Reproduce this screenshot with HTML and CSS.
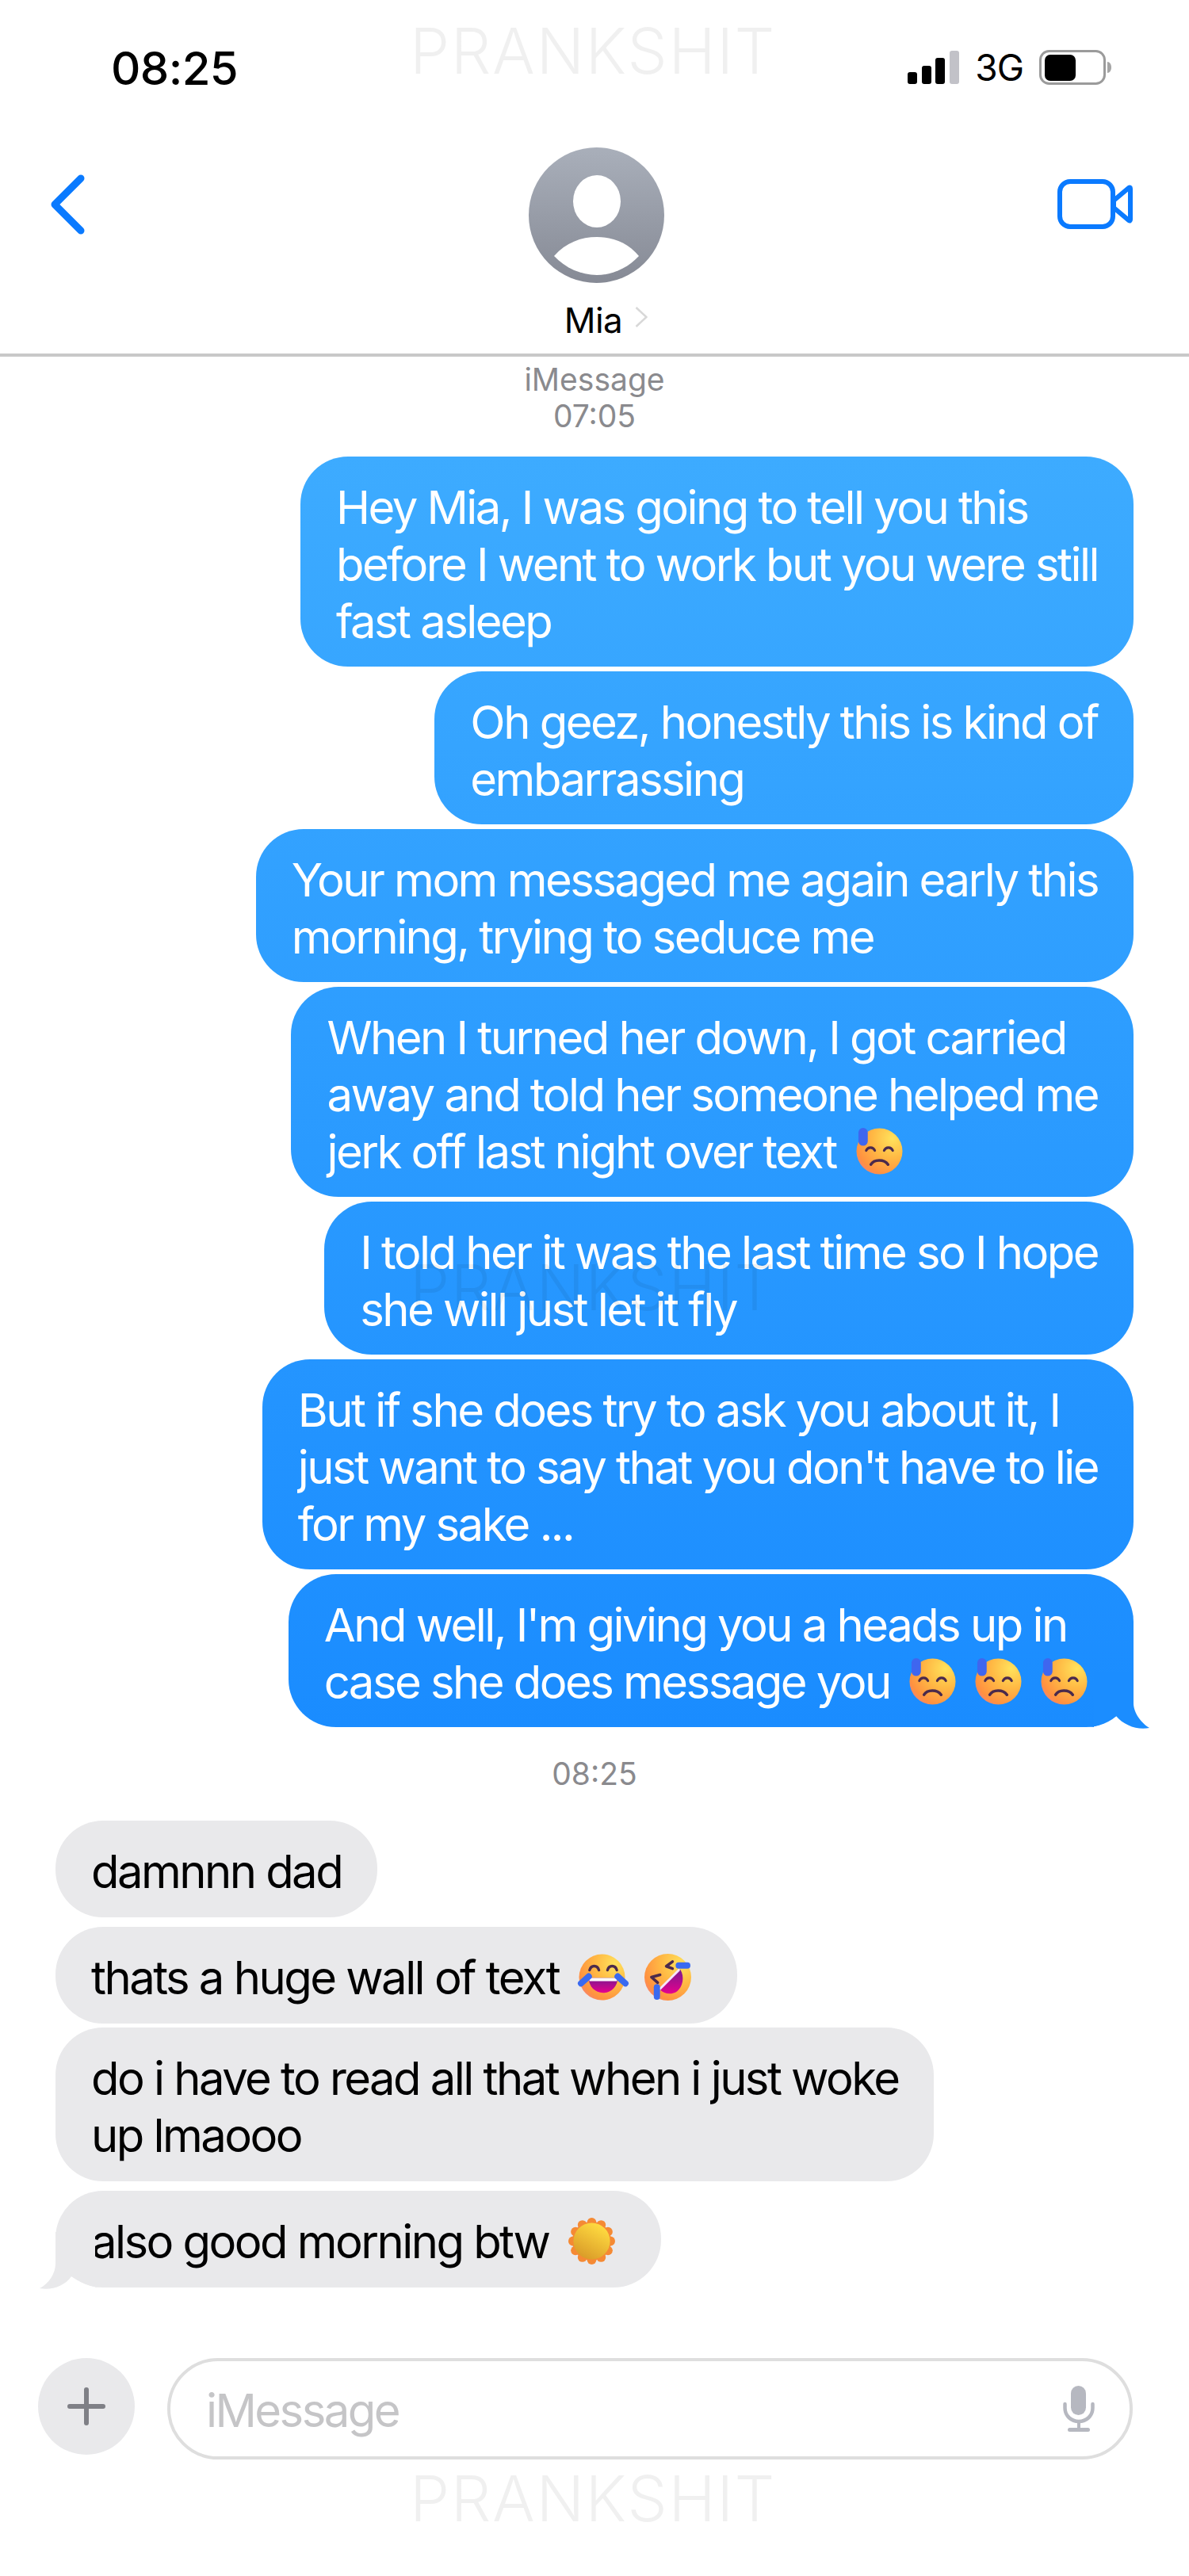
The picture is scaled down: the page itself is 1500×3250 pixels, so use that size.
FILE: index.html
```html
<!DOCTYPE html>
<html lang="en">
<head>
<meta charset="utf-8">
<title>Mia</title>
<link rel="stylesheet" href="styles.css">
</head>
<body>
<svg class="defs" aria-hidden="true">
  <defs>
    <linearGradient id="avatarG" x1="0" y1="0" x2="0" y2="1"><stop offset="0" stop-color="#a9afba"/><stop offset="1" stop-color="#868a95"/></linearGradient>
    <radialGradient id="faceG" cx="0.78" cy="0.22" r="0.95"><stop offset="0" stop-color="#ffe25c"/><stop offset="0.45" stop-color="#ffb944"/><stop offset="0.85" stop-color="#ff9140"/><stop offset="1" stop-color="#f5827a"/></radialGradient>
    <linearGradient id="mouthG" x1="0" y1="0" x2="0" y2="1"><stop offset="0" stop-color="#7a1a8e"/><stop offset="1" stop-color="#e6008e"/></linearGradient>
    <linearGradient id="sunG" x1="0.8" y1="0.1" x2="0.3" y2="1"><stop offset="0" stop-color="#ffdb40"/><stop offset="1" stop-color="#d99a28"/></linearGradient>
    <symbol id="sad" viewBox="0 0 60 60" overflow="visible">
      <circle cx="30" cy="30" r="29.5" fill="url(#faceG)"/>
      <rect x="3" y="0" width="12" height="23" rx="6" fill="#3f66ef"/>
      <g fill="none" stroke="#4b2a4c" stroke-width="3.2" stroke-linecap="round">
        <path d="M13 29c2-5 9-5 11 0"/><path d="M36 29c2-5 9-5 11 0"/>
        <path d="M19 47c4-7 17-7 22 0" stroke-width="3.6"/>
      </g>
    </symbol>
    <symbol id="joy" viewBox="0 0 60 60" overflow="visible">
      <circle cx="30" cy="30" r="29.5" fill="url(#faceG)"/>
      <path d="M13 31h37c0 11-8 19-18.500 19S13 42 13 31z" fill="url(#mouthG)"/>
      <path d="M13 31h37l-1 4H14z" fill="#fff"/>
      <g fill="none" stroke="#4b2a4c" stroke-width="3.400" stroke-linecap="round">
        <path d="M14 21c2-7 10-7 12 0"/><path d="M37 21c2-7 10-7 12 0"/>
      </g>
      <g fill="none" stroke="#3a6af0" stroke-width="8" stroke-linecap="round">
        <path d="M3 38l10-9"/><path d="M50 29l10 9"/>
      </g>
    </symbol>
    <symbol id="rofl" viewBox="0 0 60 60" overflow="visible">
      <circle cx="30" cy="30" r="30" fill="url(#faceG)"/>
      <path d="M20 46L46 20c6 10 3 22-4 28-7 5-16 4-22-2z" fill="url(#mouthG)"/>
      <path d="M20 46L46 20l1 3-25 25z" fill="#f7e6ff" transform="translate(-1.500 -1.500)"/>
      <g fill="none" stroke="#4b2a4c" stroke-width="3.600" stroke-linecap="round" stroke-linejoin="round">
        <path d="M36 10l-8 6 8 3"/><path d="M20 27l-11 3 8 7"/>
      </g>
      <g fill="none" stroke="#3a6af0" stroke-width="8" stroke-linecap="round">
        <path d="M44 15h11"/><path d="M16 43v12"/>
      </g>
    </symbol>
    <symbol id="sun" viewBox="0 0 60 60" overflow="visible">
      <g fill="#f58a34">
        <circle cx="30" cy="6" r="6"/><circle cx="42" cy="9.200" r="6"/><circle cx="50.800" cy="18" r="6"/><circle cx="54" cy="30" r="6"/><circle cx="50.800" cy="42" r="6"/><circle cx="42" cy="50.800" r="6"/><circle cx="30" cy="54" r="6"/><circle cx="18" cy="50.800" r="6"/><circle cx="9.200" cy="42" r="6"/><circle cx="6" cy="30" r="6"/><circle cx="9.200" cy="18" r="6"/><circle cx="18" cy="9.200" r="6"/>
        <circle cx="30" cy="30" r="25"/>
      </g>
      <circle cx="30" cy="30" r="23.500" fill="url(#sunG)"/>
    </symbol>
  </defs>
</svg>

<main class="page">
  <header class="status">
    <span class="clock">08:25</span>
    <div class="indicators">
      <svg class="signal" viewBox="0 0 65 42">
        <rect x="0" y="27" width="12" height="15" rx="3" fill="#000"/>
        <rect x="18" y="19" width="12" height="23" rx="3" fill="#000"/>
        <rect x="35" y="9" width="12" height="33" rx="3" fill="#000"/>
        <rect x="53" y="0" width="12" height="42" rx="3" fill="#c2c2c8"/>
      </svg>
      <span class="network">3G</span>
      <svg class="battery" viewBox="0 0 91 44">
        <rect x="1.500" y="1.500" width="81" height="41" rx="11" fill="none" stroke="#9b9b9b" stroke-width="3"/>
        <rect x="7" y="6" width="39" height="33" rx="7" fill="#000"/>
        <path d="M86 15c3 0 5 3 5 7s-2 7-5 7z" fill="#a5a5a5"/>
      </svg>
    </div>
  </header>

  <nav class="nav">
    <svg class="back" viewBox="0 0 46 78"><path d="M40 6L7 39l33 33" fill="none" stroke="#0a7aff" stroke-width="9" stroke-linecap="round" stroke-linejoin="round"/></svg>
    <div class="contact">
      <svg class="avatar" viewBox="0 0 171 171">
        <circle cx="85.500" cy="85.500" r="85.500" fill="url(#avatarG)"/>
        <ellipse cx="86" cy="68" rx="30" ry="33" fill="#fff"/>
        <path d="M32 137c15-17 34-24 54-24s39 7 53 24c-14 15-33 24-53 24s-40-9-54-24z" fill="#fff"/>
      </svg>
      <div class="name-row">
        <span class="name">Mia</span>
        <svg class="name-chevron" viewBox="0 0 16 26"><path d="M1.500 1l13 12-13 12" fill="none" stroke="#d8d8d8" stroke-width="2.500"/></svg>
      </div>
    </div>
    <svg class="video" viewBox="0 0 95 63">
      <rect x="3" y="3" width="67" height="57" rx="13" fill="none" stroke="#0a7aff" stroke-width="6"/>
      <path d="M71 27l19-16c1.500-1 2-.500 2 1v39c0 1.500-.5 2-2 1L71 36z" fill="none" stroke="#0a7aff" stroke-width="6" stroke-linejoin="round"/>
    </svg>
  </nav>

  <section class="thread">
    <p class="stamp stamp-first">iMessage<br>07:05</p>
    <div class="group group-sent">
      <div class="bubble sent">Hey Mia, I was going to tell you this<br>before I went to work but you were still<br>fast asleep</div>
      <div class="bubble sent">Oh geez, honestly this is kind of<br>embarrassing</div>
      <div class="bubble sent">Your mom messaged me again early this<br>morning, trying to seduce me</div>
      <div class="bubble sent">When I turned her down, I got carried<br>away and told her someone helped me<br>jerk off last night over text <svg class="emoji emoji-first"><use href="#sad"/></svg></div>
      <div class="bubble sent">I told her it was the last time so I hope<br>she will just let it fly</div>
      <div class="bubble sent">But if she does try to ask you about it, I<br>just want to say that you don't have to lie<br>for my sake ...</div>
      <div class="bubble sent tailed">And well, I'm giving you a heads up in<br>case she does message you <svg class="emoji emoji-first"><use href="#sad"/></svg> <svg class="emoji"><use href="#sad"/></svg> <svg class="emoji emoji-last"><use href="#sad"/></svg>
        <svg class="tail tail-sent" viewBox="0 0 80 73"><path d="M10 0H60V40C60 52 70 65 80 71C65 74 48 68 38 56C30 62 15 70 0 70H10Z" fill="#1b8dff"/></svg>
      </div>
    </div>
    <p class="stamp stamp-mid">08:25</p>
    <div class="group group-received">
      <div class="bubble received">damnnn dad</div>
      <div class="bubble received near-b">thats a huge wall of text <svg class="emoji emoji-first"><use href="#joy"/></svg> <svg class="emoji emoji-last"><use href="#rofl"/></svg></div>
      <div class="bubble received near-c">do i have to read all that when i just woke<br>up lmaooo</div>
      <div class="bubble received near-b tailed">also good morning btw <svg class="emoji emoji-first emoji-last"><use href="#sun"/></svg>
        <svg class="tail tail-received" viewBox="0 0 80 73"><path d="M70 0H20V40C20 52 12 65 0 71C15 74 32 68 40 56C48 62 65 70 80 70H70Z" fill="#e9e9eb"/></svg>
      </div>
    </div>
  </section>

  <footer class="composer">
    <div class="plus">
      <svg class="plus-icon" viewBox="0 0 48 48"><path d="M24 3v42M3 24h42" fill="none" stroke="#7f8086" stroke-width="6" stroke-linecap="round"/></svg>
    </div>
    <div class="field">
      <span class="placeholder">iMessage</span>
      <svg class="mic" viewBox="0 0 40 58">
        <rect x="10" y="0" width="19" height="37" rx="9.500" fill="#b6b8c0"/>
        <path d="M2.500 23v5c0 10 8 17 17.500 17s17.500-7 17.500-17v-5" fill="none" stroke="#b6b8c0" stroke-width="4.500" stroke-linecap="round"/>
        <path d="M20 45v9" stroke="#b6b8c0" stroke-width="4"/>
        <rect x="6" y="53" width="28" height="5" rx="2.500" fill="#b6b8c0"/>
      </svg>
    </div>
  </footer>

  <div class="wm wm-top">PRANKSHIT</div>
  <div class="wm wm-mid">PRANKSHIT</div>
  <div class="wm wm-bottom">PRANKSHIT</div>
</main>
</body>
</html>
```
FILE: styles.css
```css
* { box-sizing: border-box; }
html, body { margin: 0; padding: 0; background: #fff; }
body { font-family: Inter, "Liberation Sans", sans-serif; color: #000; }
.defs { position: absolute; width: 0; height: 0; }
.page { position: relative; width: 1500px; height: 3250px; overflow: hidden; background: #fff; }

/* status bar */
.status { height: 186px; display: flex; justify-content: space-between; align-items: flex-start; padding: 55px 98px 0 140px; }
.clock { font-size: 58px; line-height: 62px; font-weight: 500; letter-spacing: -.6px; }
.indicators { display: flex; align-items: center; padding-top: 8px; }
.signal { width: 65px; height: 42px; display: block; }
.network { font-size: 46px; line-height: 44px; margin-left: 20px; letter-spacing: -1px; }
.battery { width: 91px; height: 44px; display: block; margin-left: 20px; }

/* nav */
.nav { height: 264px; display: grid; grid-template-columns: 605px 171px 1fr; align-items: start; padding: 0 71px 0 62px; border-bottom: 4px solid #c8c8c8; }
.back { width: 46px; height: 78px; margin-top: 33px; display: block; }
.contact { display: flex; flex-direction: column; align-items: center; }
.avatar { width: 171px; height: 171px; display: block; }
.name-row { display: flex; align-items: center; gap: 16px; margin-top: 22px; height: 50px; padding-left: 24px; }
.name { font-size: 44px; line-height: 50px; letter-spacing: -.5px; }
.name-chevron { width: 16px; height: 26px; display: block; margin-top: -8px; }
.video { width: 95px; height: 63px; margin-top: 40px; display: block; justify-self: end; }

/* thread */
.thread { display: flex; flex-direction: column; }
.stamp { margin: 0; text-align: center; color: #8a8a8e; font-size: 39px; line-height: 46px; }
.stamp-first { padding-top: 6px; margin-bottom: 28px; }
.stamp-mid { margin-top: 36px; margin-bottom: 36px; }
.group { display: flex; flex-direction: column; }
.group-sent { align-items: flex-end; gap: 6px; padding-right: 70px; }
.group-received { align-items: flex-start; padding-left: 70px; }
.bubble { position: relative; padding: 28px 45px 21px; border-radius: 60px; font-size: 58px; line-height: 72px; letter-spacing: -2.55px; white-space: nowrap; }
.sent { color: #fff; background: linear-gradient(180deg, #3dabff 576px, #1a8cff 2180px) fixed; }
.received { background: #e9e9eb; color: #000; padding-bottom: 22px; }
.near-b { margin-top: 12px; }
.near-c { margin-top: 5px; }
.emoji { width: 59px; height: 59px; vertical-align: -8px; margin: 0 5px; overflow: visible; }
.emoji-first { margin-left: 11px; }
.emoji-last { margin-right: 13px; }
.tail { position: absolute; width: 80px; height: 73px; bottom: -3px; display: block; }
.tail-sent { right: -20px; }
.tail-received { left: -20px; }

/* composer */
.composer { display: flex; align-items: flex-start; gap: 41px; margin-top: 89px; padding-left: 48px; }
.plus { width: 122px; height: 122px; border-radius: 50%; background: #e9e9eb; display: flex; align-items: center; justify-content: center; }
.plus-icon { width: 48px; height: 48px; display: block; }
.field { width: 1218px; height: 128px; border: 4px solid #dedede; border-radius: 64px; display: flex; align-items: center; justify-content: space-between; padding: 0 44px 0 45px; }
.placeholder { font-size: 58px; letter-spacing: -2.55px; color: #c5c5c7; padding-top: 4px; }
.mic { width: 40px; height: 58px; display: block; }

/* watermark */
.wm { position: absolute; left: 0; width: 1496px; text-align: center; font-size: 80px; line-height: 90px; font-weight: 300; letter-spacing: 1.5px; color: rgba(0, 0, 0, .06); }
.wm-top { top: 19px; }
.wm-mid { top: 1579px; }
.wm-bottom { top: 3107px; }
```
